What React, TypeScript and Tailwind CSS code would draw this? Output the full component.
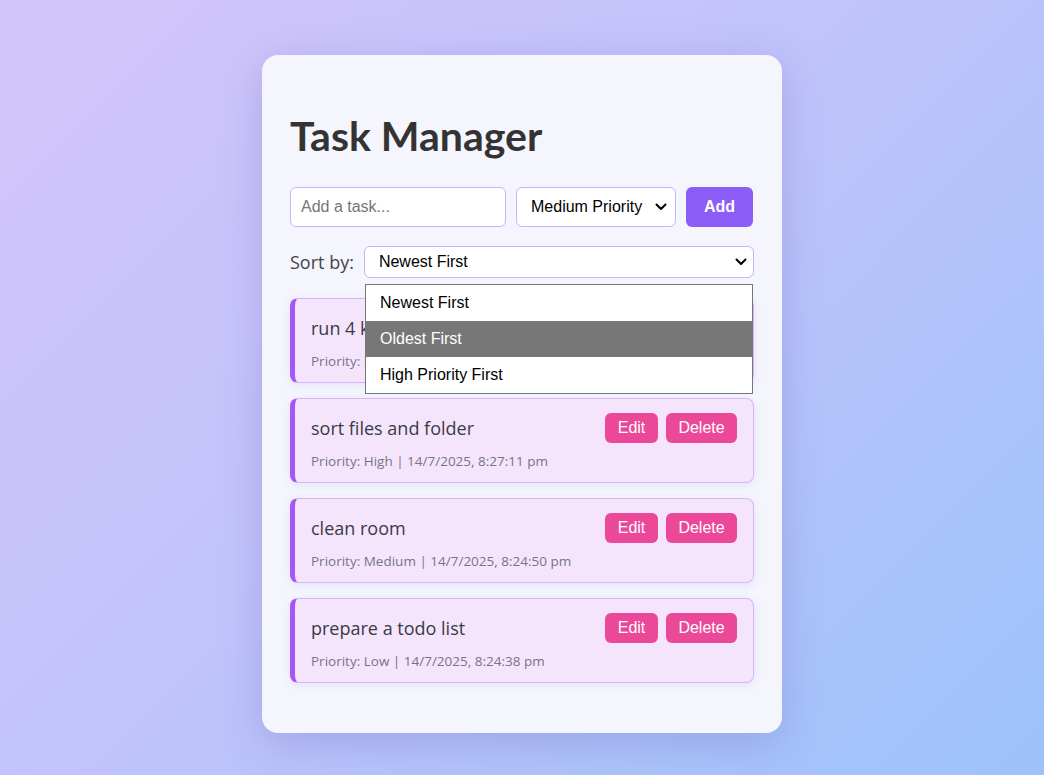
import React from 'react'

const tasks = [
  { title: 'run 4 km', meta: 'Priority: Medium | 14/7/2025, 8:30:02 pm' },
  { title: 'sort files and folder', meta: 'Priority: High | 14/7/2025, 8:27:11 pm' },
  { title: 'clean room', meta: 'Priority: Medium | 14/7/2025, 8:24:50 pm' },
  { title: 'prepare a todo list', meta: 'Priority: Low | 14/7/2025, 8:24:38 pm' },
]

const Chevron = () => (
  <svg width="12" height="8" viewBox="0 0 12 8" className="pointer-events-none">
    <path d="M1.5 1.5 L6 6 L10.5 1.5" fill="none" stroke="#000" strokeWidth="2" strokeLinecap="round" strokeLinejoin="round" />
  </svg>
)

const App = () => {
  return (
    <div className="min-h-[775px] w-full bg-[linear-gradient(135deg,#d3c5fb_0%,#c2c3fb_45%,#9cc3fa_100%)] flex justify-center pt-[55px] pb-[42px] font-['Open_Sans',sans-serif]">
      <div className="w-[520px] bg-[#f4f5fd] rounded-2xl shadow-[0_10px_40px_rgba(90,80,170,0.25)] px-7 pt-7 pb-[48px]">
        <h1 className="mt-[29px] mb-[27px] text-[41px] leading-[48px] font-bold text-[#333] font-['Lato',sans-serif]">Task Manager</h1>

        <div className="flex gap-[10px] h-10">
          <input
            className="w-[216px] h-10 rounded-md border border-[#c4b5fd] bg-white px-[10px] text-base font-['Liberation_Sans',Arial,sans-serif] placeholder:text-[#767676] outline-none"
            placeholder="Add a task..."
          />
          <div className="w-[160px] h-10 rounded-md border border-[#c4b5fd] bg-white flex items-center justify-between pl-[14px] pr-[8px] text-base text-black font-['Liberation_Sans',Arial,sans-serif]">
            <span>Medium Priority</span>
            <Chevron />
          </div>
          <button className="w-[67px] h-10 rounded-md bg-[#8b5cf6] text-white text-base font-bold font-['Liberation_Sans',Arial,sans-serif]">Add</button>
        </div>

        <div className="relative mt-[19px] flex items-center gap-[10px] h-8">
          <span className="text-[18px] text-[#444]">Sort by:</span>
          <div className="flex-1 h-8 rounded-md border border-[#c4b5fd] bg-white flex items-center justify-between pl-[14px] pr-[6px] text-base text-black font-['Liberation_Sans',Arial,sans-serif]">
            <span>Newest First</span>
            <Chevron />
          </div>
          <div className="absolute left-[75px] right-px top-[38px] z-10 bg-white border border-[#767676] text-base font-['Liberation_Sans',Arial,sans-serif]">
            <div className="h-9 flex items-center px-[14px] text-black">Newest First</div>
            <div className="h-9 flex items-center px-[14px] bg-[#777] text-white">Oldest First</div>
            <div className="h-9 flex items-center px-[14px] text-black">High Priority First</div>
          </div>
        </div>

        <div className="mt-5 flex flex-col gap-[15px]">
          {tasks.map((t) => (
            <div
              key={t.title}
              className="rounded-lg border border-[#d8b4fe] border-l-[5px] border-l-[#a855f7] bg-[#f4e5fd] pl-4 pr-4 pt-[14px] pb-[11px] shadow-[0_2px_8px_rgba(120,100,200,0.12)]"
            >
              <div className="flex items-center justify-between h-[30px]">
                <span className="text-[18px] text-[#3b3b45]">{t.title}</span>
                <div className="flex gap-2 font-['Liberation_Sans',Arial,sans-serif]">
                  <button className="w-[53px] h-[30px] rounded-md bg-[#ec4899] text-white text-base">Edit</button>
                  <button className="w-[71px] h-[30px] rounded-md bg-[#ec4899] text-white text-base">Delete</button>
                </div>
              </div>
              <div className="mt-[8px] text-[13.5px] leading-5 text-[#777486]">{t.meta}</div>
            </div>
          ))}
        </div>
      </div>
    </div>
  )
}

export default App
